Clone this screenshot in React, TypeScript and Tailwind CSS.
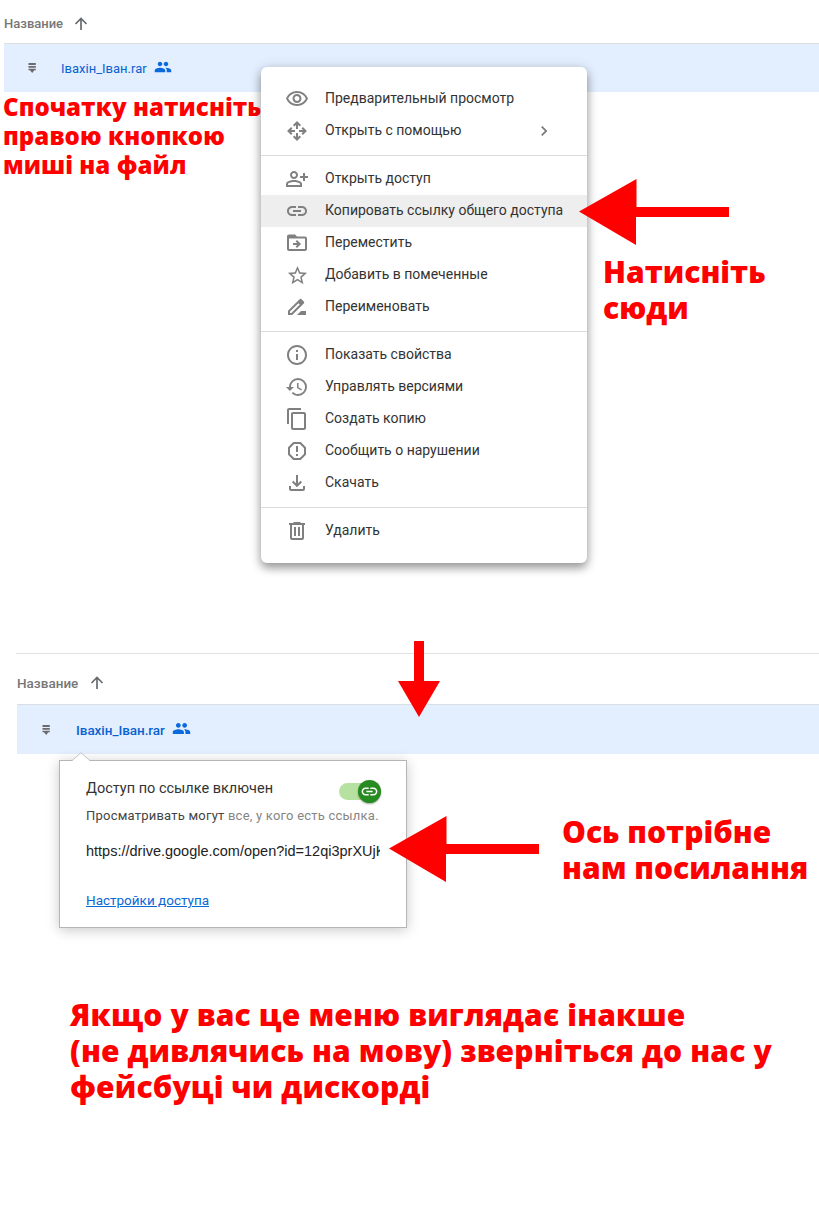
import type { ReactNode } from "react";
import {
  MdOutlineVisibility,
  MdOutlinePersonAddAlt,
  MdLink,
  MdStarBorder,
  MdInfoOutline,
  MdRestore,
  MdContentCopy,
  MdChevronRight,
} from "react-icons/md";

function Glyph({ children }: { children: ReactNode }) {
  return (
    <svg viewBox="0 0 24 24" className="size-6" fill="currentColor">
      {children}
    </svg>
  );
}

const MoveAllIcon = () => (
  <Glyph>
    <g fill="none" stroke="currentColor" strokeWidth="2">
      <path d="M8.700 6.800L12 3.500l3.300 3.300M8.700 17.200L12 20.500l3.300-3.300M6.800 8.700L3.500 12l3.300 3.300M17.200 8.700l3.300 3.300-3.300 3.300" />
      <path d="M12 4v6M12 14v6M4 12h6M14 12h6" />
    </g>
  </Glyph>
);

const FolderMoveIcon = () => (
  <Glyph>
    <path d="M20 5.500h-8l-2-2H4c-1.100 0-2 .9-2 2v12.500c0 1.100.9 2 2 2h16c1.100 0 2-.9 2-2V7.500c0-1.100-.9-2-2-2zm0 12.500H4V7.500h16v10.500z" />
    <path d="M8 12h4.200l-1.600-1.600L12 9l4 4-4 4-1.400-1.400 1.600-1.600H8z" />
  </Glyph>
);

const RenameIcon = () => (
  <Glyph>
    <path
      d="M3 20v-4.200L14.600 4.200a1.400 1.400 0 0 1 2 0l2.200 2.200a1.400 1.400 0 0 1 0 2L7.200 20zM5 18h1.400l8.400-8.400-1.400-1.400L5 16.600z"
      fillRule="evenodd"
    />
    <path d="M12 20l4-4h5v4z" />
  </Glyph>
);

const ReportIcon = () => (
  <Glyph>
    <path
      d="M8.700 4h6.600L20 8.700v6.600L15.300 20H8.700L4 15.300V8.700z"
      fill="none"
      stroke="currentColor"
      strokeWidth="2"
      strokeLinejoin="round"
    />
    <path d="M11 7h2v6h-2zM11 15h2v2h-2z" />
  </Glyph>
);

const DownloadIcon = () => (
  <Glyph>
    <path d="M4 15v3a2 2 0 0 0 2 2h12a2 2 0 0 0 2-2v-3h-2v3H6v-3z" />
    <path d="M12 4v11M7.700 10.500L12 14.800l4.300-4.300" fill="none" stroke="currentColor" strokeWidth="2" />
  </Glyph>
);

const TrashIcon = () => (
  <Glyph>
    <path d="M4 4h4.500V3h7v1H20v2h-1v13a2 2 0 0 1-2 2H7a2 2 0 0 1-2-2V6H4zM7 6v13h10V6z" fillRule="evenodd" />
    <path d="M9 8h2v9H9zM13 8h2v9h-2z" />
  </Glyph>
);

function PeopleIcon({ className }: { className: string }) {
  return (
    <svg viewBox="0 0 24 24" className={`shrink-0 text-[#0a69dc] ${className}`} fill="currentColor">
      <path d="M16 11c1.660 0 2.990-1.340 2.990-3S17.660 5 16 5s-3 1.340-3 3 1.340 3 3 3zM8 11c1.660 0 2.990-1.340 2.990-3S9.660 5 8 5 5 6.340 5 8s1.340 3 3 3zM8 13c-2.330 0-7 1.170-7 3.500V19h14v-2.500C15 14.170 10.330 13 8 13zM16 13c-.29 0-.62.02-.97.05C16.190 13.890 17 15.020 17 16.500V19h6v-2.500c0-2.330-4.670-3.500-7-3.500z" />
    </svg>
  );
}

type Item = { label: string; icon: ReactNode; active?: boolean; submenu?: boolean };

const groups: Item[][] = [
  [
    { label: "Предварительный просмотр", icon: <MdOutlineVisibility size={24} /> },
    { label: "Открыть с помощью", icon: <MoveAllIcon />, submenu: true },
  ],
  [
    { label: "Открыть доступ", icon: <MdOutlinePersonAddAlt size={24} /> },
    { label: "Копировать ссылку общего доступа", icon: <MdLink size={24} />, active: true },
    { label: "Переместить", icon: <FolderMoveIcon /> },
    { label: "Добавить в помеченные", icon: <MdStarBorder size={23} /> },
    { label: "Переименовать", icon: <RenameIcon /> },
  ],
  [
    { label: "Показать свойства", icon: <MdInfoOutline size={24} /> },
    { label: "Управлять версиями", icon: <MdRestore size={24} /> },
    { label: "Создать копию", icon: <MdContentCopy size={24} /> },
    { label: "Сообщить о нарушении", icon: <ReportIcon /> },
    { label: "Скачать", icon: <DownloadIcon /> },
  ],
  [{ label: "Удалить", icon: <TrashIcon /> }],
];

function ContextMenu() {
  return (
    <div className="absolute left-[261px] top-[67px] w-[326px] rounded-[6px] bg-white py-4 shadow-[0_5px_10px_rgba(0,0,0,0.36),0_1px_14px_rgba(0,0,0,0.12)]">
      {groups.map((group, i) => (
        <div key={i}>
          {i > 0 && <div className="mb-[7px] mt-2 h-px bg-[#dadcde]" />}
          {group.map((item) => (
            <div
              key={item.label}
              className={`flex h-8 items-center pl-6 ${item.active ? "bg-[#eeeeee]" : ""}`}
            >
              <span className="flex size-6 items-center justify-center text-[#808080]">{item.icon}</span>
              <span className="mb-0.5 ml-4 whitespace-nowrap text-[14px] leading-5 text-[#333333]">{item.label}</span>
              {item.submenu && <MdChevronRight size={20} className="ml-auto mr-[33px] text-[#777777]" />}
            </div>
          ))}
        </div>
      ))}
    </div>
  );
}

function ArrowUp() {
  return (
    <svg viewBox="0 0 14 14" className="size-[14px]" fill="none" stroke="#666b70" strokeWidth="1.700">
      <path d="M7 13V2M1.500 7L7 1.500 12.500 7" />
    </svg>
  );
}

function ArchiveIcon() {
  return (
    <svg viewBox="0 0 8 10" className="h-[10px] w-2" fill="#6b6b6b">
      <path d="M.5 0h7.300v2H.5zM.5 3h7.300v1.800H.5zM.5 5.800h7.300v1.400H6.300L4.200 10 2 7.200H.5z" />
    </svg>
  );
}

function LeftArrow({ className }: { className: string }) {
  return (
    <svg viewBox="0 0 150 66" className={`h-[66px] w-[150px] ${className}`} fill="#ff0000">
      <path d="M0 32.500L57.500 0v28H150v10H57v28z" />
    </svg>
  );
}

function SharePopup() {
  return (
    <div className="absolute left-[59px] top-[107px] h-[168px] w-[348px] border border-[#b5b5b5] bg-white px-[26px] pt-4 shadow-[0_2px_12px_rgba(0,0,0,0.22)]">
      <svg viewBox="0 0 18 10" className="absolute left-[12px] top-[-9px] h-[10px] w-[18px]">
        <path d="M0 9L9 .7 18 9v1H0z" fill="white" />
        <path d="M0 8.700L9 .7l9 8" fill="none" stroke="#c4c4c4" />
      </svg>
      <div className="flex h-[23px] items-center justify-between">
        <span className="whitespace-nowrap text-[14.500px] leading-5 text-[#333333]">Доступ по ссылке включен</span>
        <span className="-mr-px mt-[5px] flex h-[17px] w-[42px] items-center justify-end rounded-full bg-[#b7e1a1]">
          <span className="flex size-[23px] shrink-0 items-center justify-center rounded-full bg-[#268b20] text-white shadow-[0_1px_2px_rgba(0,0,0,0.35)]">
            <MdLink size={19} />
          </span>
        </span>
      </div>
      <p className="mt-[6px] whitespace-nowrap text-[13px] leading-5 tracking-[0.22px] text-[#444444]">
        Просматривать могут <span className="text-[#858585]">все, у кого есть ссылка.</span>
      </p>
      <p className="mt-[15px] w-[294px] overflow-hidden whitespace-nowrap font-['Liberation_Sans',sans-serif] text-[14.500px] leading-5 text-[#222222]">
        https://drive.google.com/open?id=12qi3prXUjK
      </p>
      <a className="mt-[29px] block whitespace-nowrap text-[13.500px] leading-5 text-[#0a69d6] underline">
        Настройки доступа
      </a>
    </div>
  );
}

const note = "whitespace-nowrap font-['Open_Sans',sans-serif] font-extrabold text-[#ff0000]";

export default function App() {
  return (
    <div className="h-[1209px] w-[819px] overflow-hidden bg-white font-[Roboto,sans-serif]">
      <section className="relative h-[653px]">
        <div className="ml-1">
          <header className="flex h-[43px] items-center gap-[11px] pt-1 text-[13px] font-medium text-[#777777]">
            <span>Название</span>
            <ArrowUp />
          </header>
          <div className="flex h-[49px] items-center border-t border-[#d9dee3] bg-[#e3effe] pl-[24px]">
            <ArchiveIcon />
            <span className="ml-[25px] mt-px whitespace-nowrap text-[13px] text-[#0a62d0]">Івахін_Іван.rar</span>
            <PeopleIcon className="mb-[3px] ml-[7px] size-[18px]" />
          </div>
          <p className={`-ml-px text-[24px] leading-[29px] tracking-[0.080px] ${note}`}>
            Спочатку натисніть
            <br />
            правою кнопкою
            <br />
            миші на файл
          </p>
        </div>
        <ContextMenu />
        <LeftArrow className="absolute left-[579px] top-[179px]" />
        <p className={`absolute left-[603px] top-[254px] text-[30px] leading-9 ${note}`}>
          Натисніть
          <br />
          сюди
        </p>
      </section>

      <section className="relative h-[344px]">
        <div className="ml-4">
          <header className="flex h-[51px] items-center gap-3 border-t border-[#dfe1e5] pl-px pt-2 text-[13.500px] font-medium text-[#777777]">
            <span>Название</span>
            <ArrowUp />
          </header>
          <div className="ml-px flex h-[50px] items-center border-t border-[#d9dee3] bg-[#e3effe] pl-[25px]">
            <ArchiveIcon />
            <span className="ml-[26px] mt-px whitespace-nowrap text-[13.500px] font-medium tracking-[-0.050px] text-[#0a62d0]">
              Івахін_Іван.rar
            </span>
            <PeopleIcon className="mb-[3px] ml-[7px] size-[19px]" />
          </div>
        </div>
        <SharePopup />
        <svg viewBox="0 0 42 76" className="absolute left-[398px] top-[-12px] h-[76px] w-[42px]" fill="#ff0000">
          <path d="M16 0h10v40h16L21 76 0 40h16z" />
        </svg>
        <LeftArrow className="absolute left-[389px] top-[163px]" />
        <p className={`absolute left-[562px] top-[161px] text-[30px] leading-9 ${note}`}>
          Ось потрібне
          <br />
          нам посилання
        </p>
      </section>

      <p className={`pl-[70px] text-[30px] leading-9 tracking-[0.130px] ${note}`}>
        Якщо у вас це меню виглядає інакше
        <br />
        (не дивлячись на мову) зверніться до нас у
        <br />
        фейсбуці чи дискорді
      </p>
    </div>
  );
}
